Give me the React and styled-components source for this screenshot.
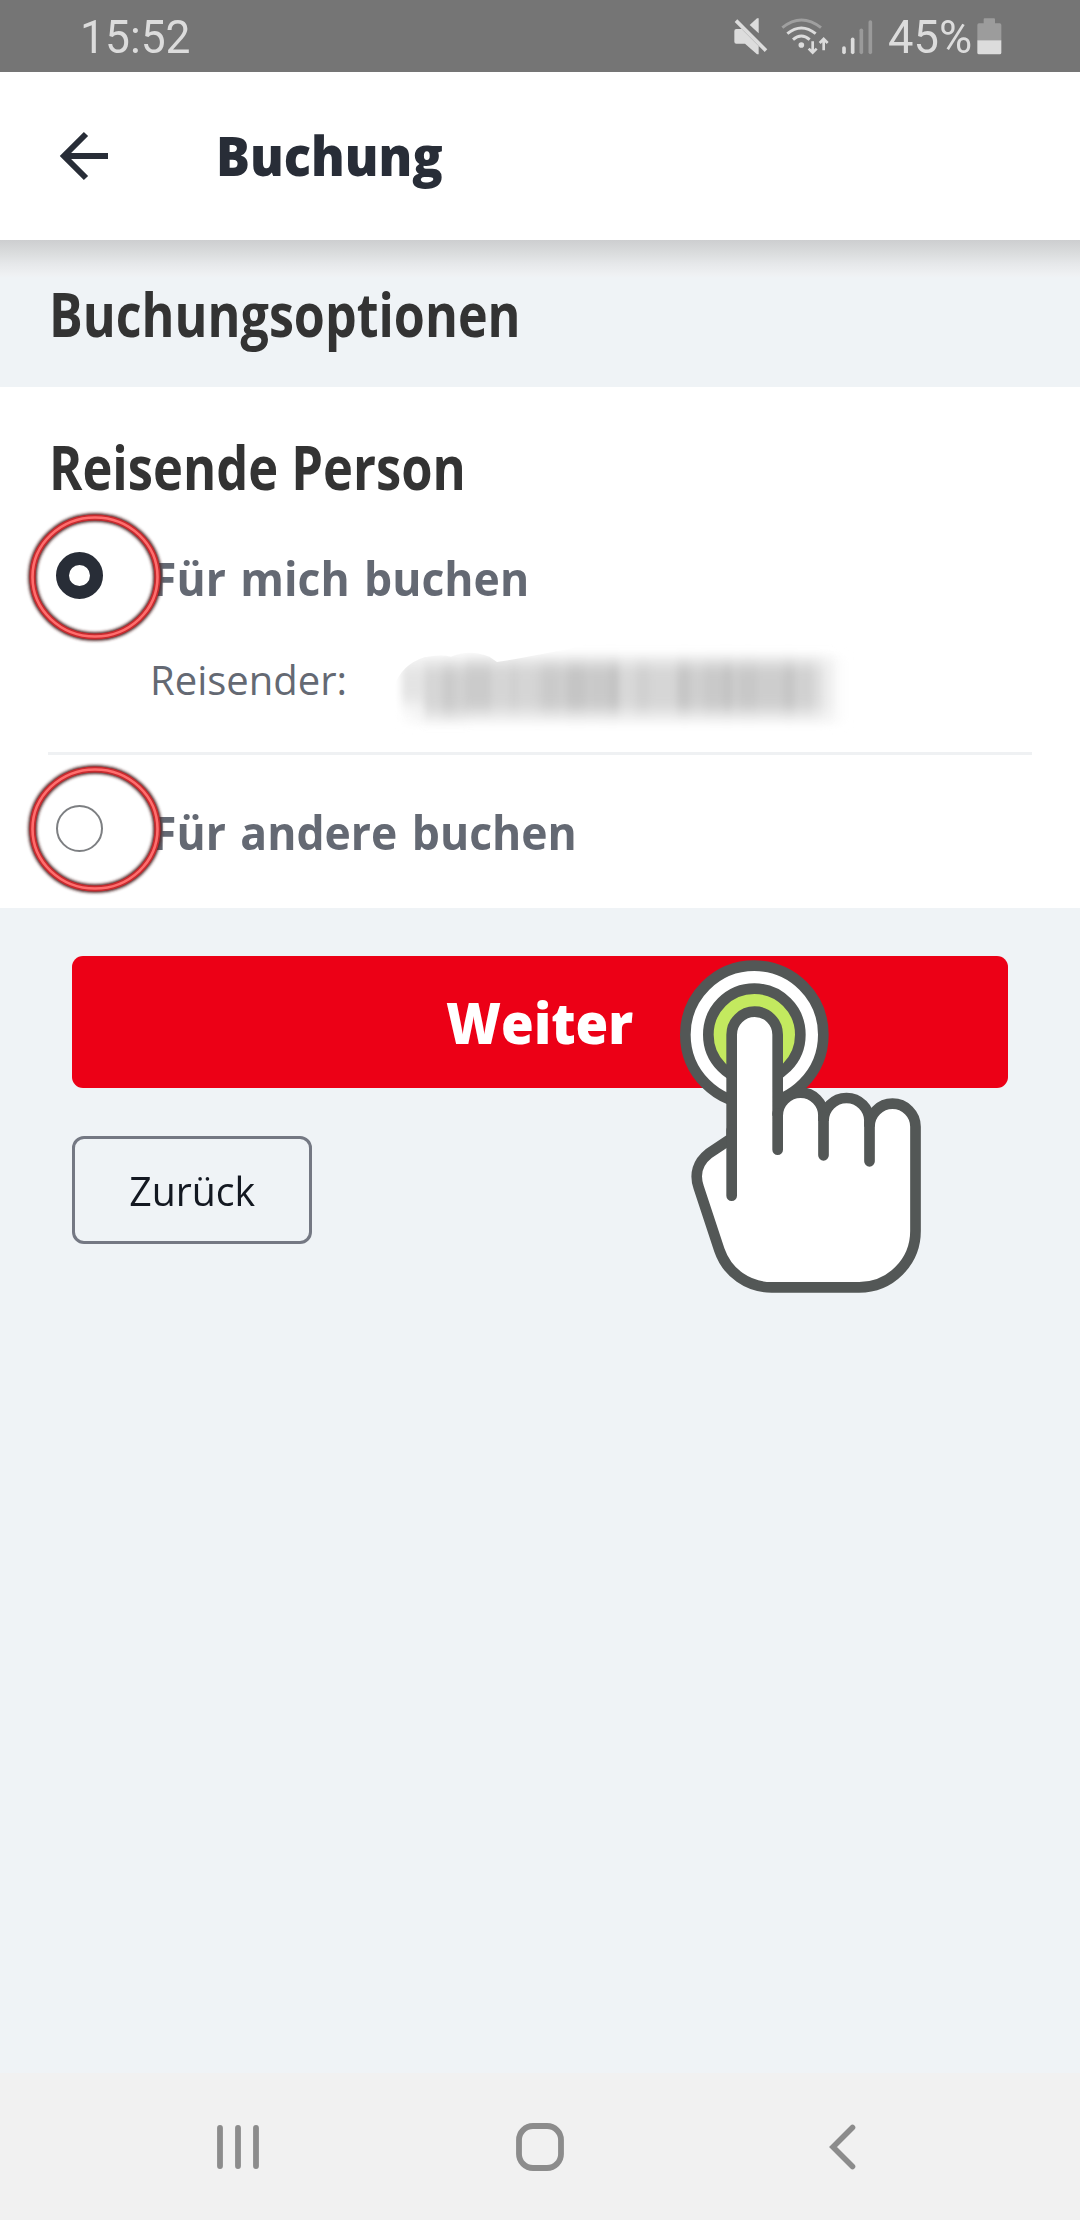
import React, { useState } from "react";
import styled, { createGlobalStyle } from "styled-components";

const GlobalStyle = createGlobalStyle`
  * {
    box-sizing: border-box;
  }
  body {
    margin: 0;
    background: #eff3f6;
    font-family: "Open Sans", "Noto Sans", sans-serif;
  }
`;

const MutedIcon = () => (
  <svg width="36" height="40" viewBox="100 50 108 120">
    <path
      d="M110 86 H126 L177 137 V162 H172 L136 130 H110 Q104 130 104 124 V92 Q104 86 110 86 Z"
      fill="#dcdcdc"
    />
    <path d="M150 74 L172 54 H177 V99 Z" fill="#dcdcdc" />
    <path d="M112 57 L200 145" stroke="#757575" strokeWidth="8" />
    <path d="M109 61 L199 151" stroke="#dcdcdc" strokeWidth="11" />
  </svg>
);

const WifiIcon = () => (
  <svg width="50" height="40" viewBox="240 50 150 120" fill="none">
    <path d="M247 82 Q304 36 363 82" stroke="#9f9f9f" strokeWidth="9" />
    <path d="M262 100 Q304 66 347 100" stroke="#dcdcdc" strokeWidth="9" />
    <path d="M279 118 Q304 96 329 118" stroke="#dcdcdc" strokeWidth="9" />
    <circle cx="304" cy="134" r="8.5" fill="#dcdcdc" />
    <path
      d="M338 123 V154 M326 145 L338 157 L350 145 M371 150 V118 M359 128 L371 116 L383 128"
      stroke="#dcdcdc"
      strokeWidth="8"
    />
  </svg>
);

const SignalIcon = () => (
  <svg width="34" height="40" viewBox="423 50 102 120" strokeWidth="11" strokeLinecap="round">
    <path d="M432 143 V156" stroke="#dcdcdc" />
    <path d="M458 117 V156" stroke="#dcdcdc" />
    <path d="M484 90 V156" stroke="#9a9a9a" />
    <path d="M511 65 V156" stroke="#9a9a9a" />
  </svg>
);

const BatteryIcon = () => (
  <svg width="26" height="40" viewBox="830 50 78 120">
    <path
      d="M850 69 V57 Q850 54 853 54 H881 Q884 54 884 57 V69 H898 Q903 69 903 74 V120 H831 V74 Q831 69 836 69 Z"
      fill="#9c9c9c"
    />
    <path d="M831 120 H903 V157 Q903 162 898 162 H836 Q831 162 831 157 Z" fill="#dcdcdc" />
  </svg>
);

const BackArrow = () => (
  <svg width="50" height="50" viewBox="0 0 50 50" fill="none" stroke="#282d37" strokeWidth="6">
    <path d="M49 25 H6" />
    <path d="M27 3 L5 25 L27 47" />
  </svg>
);

const HandPointer = () => (
  <svg width="440" height="390" viewBox="0 0 1320 1170" stroke="#535756" strokeWidth="32">
    <circle cx="343" cy="314" r="207" fill="#fff" />
    <circle cx="343" cy="314" r="138" fill="#c3e95f" />
    <path
      d="M275 630 V314 A69 69 0 0 1 413 314 V557 A68.7 69 0 0 1 550.5 557 V573 A69 69 0 0 1 688.5 573 V590 A69 69 0 0 1 826.5 590 V903 A169 169 0 0 1 657 1072 H395 C325 1072 262 1030 238 960 L176 772 C162 732 174 696 206 671 L275 625 Z"
      fill="#fff"
    />
    <path
      d="M275 600 V797 M413 550 V659 M550.5 560 V676 M688.5 575 V694"
      fill="none"
      strokeLinecap="round"
    />
  </svg>
);

// x, width, grey level
const strips = [
  [62, 78, 228], [130, 60, 214], [184, 42, 203], [222, 36, 209], [254, 82, 203],
  [330, 62, 213], [390, 20, 207], [408, 62, 213], [462, 26, 209], [484, 48, 202],
  [530, 34, 206], [558, 56, 197], [612, 24, 203], [630, 58, 201], [686, 30, 195],
  [714, 54, 216], [766, 42, 208], [806, 86, 214], [888, 42, 198], [928, 44, 207],
  [970, 62, 201], [1028, 26, 194], [1052, 24, 205], [1074, 56, 200], [1128, 82, 205],
  [1206, 38, 198], [1242, 60, 209], [1298, 30, 222], [1326, 30, 238],
];

const BlurredName = () => (
  <svg width="500" height="110" viewBox="0 0 1500 330">
    <defs>
      <filter id="smear" x="-10%" y="-60%" width="120%" height="220%">
        <feGaussianBlur stdDeviation="11 23" />
      </filter>
      <filter id="halo" x="-10%" y="-60%" width="120%" height="220%">
        <feGaussianBlur stdDeviation="22 14" />
      </filter>
      <clipPath id="brush">
        <path d="M40 330 V170 Q60 105 130 82 Q180 72 210 80 Q265 56 325 80 L348 96 L400 88 L560 58 L700 20 H1460 V330 Z" />
      </clipPath>
    </defs>
    <g clipPath="url(#brush)">
      <rect x="80" y="80" width="1290" height="200" fill="#f6f6f6" filter="url(#halo)" />
      <g filter="url(#smear)">
        {strips.map(([x, width, grey]) => (
          <rect
            key={x}
            x={x}
            y={x < 240 ? 102 : 96}
            width={width}
            height={x < 130 ? 120 : 152}
            fill={`rgb(${grey},${grey},${grey})`}
          />
        ))}
      </g>
    </g>
  </svg>
);

const MarkerRing = () => (
  <svg width="144" height="144" viewBox="-72 -72 144 144" fill="none">
    <defs>
      <filter id="soft" x="-20%" y="-20%" width="140%" height="140%">
        <feGaussianBlur stdDeviation="1.4" />
      </filter>
    </defs>
    <ellipse rx="62.5" ry="59.5" stroke="#4b2020" strokeWidth="8.5" filter="url(#soft)" />
    <ellipse rx="62.5" ry="59.5" stroke="#c92b2f" strokeWidth="6" />
    <ellipse rx="62.5" ry="59.5" stroke="#ff6d6d" strokeWidth="2.6" />
  </svg>
);

const App = () => {
  const [traveller, setTraveller] = useState("me");

  return (
    <Screen>
      <GlobalStyle />
      <StatusBar>
        <StatusText $squeeze={0.965}>15:52</StatusText>
        <StatusIcons>
          <MutedIcon />
          <WifiIcon />
          <SignalIcon />
          <StatusText $squeeze={0.985}>45%</StatusText>
          <BatteryIcon />
        </StatusIcons>
      </StatusBar>

      <Header>
        <BackArrow />
        <HeaderTitle>Buchung</HeaderTitle>
      </Header>

      <SectionBar>
        <Heading>Buchungsoptionen</Heading>
      </SectionBar>

      <Card>
        <Heading as="h3" $size={60} $squeeze={0.844}>
          Reisende Person
        </Heading>
        <Option $height={162} onClick={() => setTraveller("me")}>
          <Radio $checked={traveller === "me"} />
          <OptionLabel>Für mich buchen</OptionLabel>
          <Marker>
            <MarkerRing />
          </Marker>
        </Option>
        <TravellerRow>
          <TravellerLabel>Reisender:</TravellerLabel>
          <BlurredName />
        </TravellerRow>
        <Divider />
        <Option $height={153} onClick={() => setTraveller("other")}>
          <Radio $checked={traveller === "other"} />
          <OptionLabel>Für andere buchen</OptionLabel>
          <Marker $lift={2}>
            <MarkerRing />
          </Marker>
        </Option>
      </Card>

      <Actions>
        <PrimaryButton>
          <ButtonText $squeeze={0.93}>Weiter</ButtonText>
          <Pointer>
            <HandPointer />
          </Pointer>
        </PrimaryButton>
        <SecondaryButton>
          <ButtonText $squeeze={0.98}>Zurück</ButtonText>
        </SecondaryButton>
      </Actions>

      <NavBar>
        <svg width="44" height="50" viewBox="0 0 44 50" stroke="#8c8c8c" strokeWidth="5.8" strokeLinecap="round">
          <path d="M4 6 V44 M22 6 V44 M40 6 V44" />
        </svg>
        <svg width="50" height="50" viewBox="0 0 50 50" fill="none" stroke="#8c8c8c" strokeWidth="5.8">
          <rect x="4" y="4" width="42" height="42" rx="14" />
        </svg>
        <svg
          width="44"
          height="50"
          viewBox="0 0 44 50"
          fill="none"
          stroke="#8c8c8c"
          strokeWidth="5.6"
          strokeLinecap="round"
        >
          <path d="M32.5 5.5 L13 25 L32.5 44.5" />
        </svg>
      </NavBar>
    </Screen>
  );
};

const Screen = styled.main`
  display: flex;
  flex-direction: column;
  width: 1080px;
  height: 2220px;
  overflow: hidden;
`;

const StatusBar = styled.div`
  display: flex;
  justify-content: space-between;
  align-items: center;
  height: 72px;
  padding: 2px 77px 0 80px;
  background: #757575;
  svg {
    display: block;
  }
`;

const StatusText = styled.span`
  font-family: Roboto, sans-serif;
  font-size: 46px;
  line-height: 70px;
  color: #dcdcdc;
  transform: scaleX(${(p) => p.$squeeze});
  transform-origin: left;
`;

const StatusIcons = styled.div`
  display: flex;
  align-items: center;
  height: 70px;
  svg + svg {
    margin-left: 11px;
  }
  span {
    margin: 0 4px 0 13px;
  }
`;

const Header = styled.header`
  display: flex;
  align-items: center;
  height: 168px;
  padding-left: 59px;
  background: #fff;
`;

const HeaderTitle = styled.h1`
  margin: -2px 0 0 107px;
  font-size: 54.5px;
  font-weight: 800;
  line-height: 80px;
  color: #282d37;
  transform: scaleX(0.925);
  transform-origin: left;
`;

const SectionBar = styled.div`
  display: flex;
  align-items: center;
  height: 147px;
  padding-left: 48px;
  background: linear-gradient(
    #cdced0 0,
    #dadcdd 13px,
    #e6e8ea 24px,
    #eff1f3 35px,
    #eff3f6 38px
  );
`;

const Heading = styled.h2`
  margin: 0 0 0 1px;
  font-size: ${(p) => p.$size || 61}px;
  font-weight: 700;
  line-height: 60px;
  color: #333;
  white-space: nowrap;
  transform: scaleX(${(p) => p.$squeeze || 0.823});
  transform-origin: left;
`;

const Card = styled.section`
  height: 521px;
  padding: 50px 48px 0;
  background: #fff;
`;

const Option = styled.div`
  position: relative;
  display: flex;
  align-items: center;
  height: ${(p) => p.$height}px;
  padding-left: 8px;
`;

const Radio = styled.span`
  width: 47px;
  height: 47px;
  margin-top: -6px;
  border: ${(p) => (p.$checked ? "13px solid #282d37" : "2px solid #7d7f82")};
  border-radius: 50%;
`;

const OptionLabel = styled.span`
  margin-left: 49px;
  font-size: 46px;
  font-weight: 700;
  word-spacing: 3px;
  color: #646973;
  white-space: nowrap;
  transform: scaleX(0.967);
  transform-origin: left;
`;

const Marker = styled.div`
  position: absolute;
  left: -25px;
  top: 50%;
  height: 144px;
  margin-top: ${(p) => -73 - (p.$lift || 0)}px;
`;

const TravellerRow = styled.div`
  display: flex;
  align-items: center;
  height: 41px;
  margin-bottom: 52px;
  padding-left: 102px;
  svg {
    flex: none;
    margin: 11px 0 0 34px;
  }
`;

const TravellerLabel = styled.span`
  font-size: 40px;
  color: #646973;
`;

const Divider = styled.hr`
  height: 3px;
  margin: 0;
  border: 0;
  background: #eff1f3;
`;

const Actions = styled.div`
  display: flex;
  flex: 1;
  flex-direction: column;
  align-items: flex-start;
  gap: 48px;
  padding: 48px 72px;
`;

const PrimaryButton = styled.button`
  position: relative;
  width: 100%;
  height: 132px;
  padding: 0;
  border: 0;
  border-radius: 11px;
  background: #ec0016;
  color: #fff;
  font: 800 57px "Open Sans", sans-serif;
`;

const SecondaryButton = styled.button`
  width: 240px;
  height: 108px;
  padding: 0;
  border: 3px solid #747883;
  border-radius: 12px;
  background: none;
  color: #131821;
  font: 400 40px "Open Sans", sans-serif;
`;

const ButtonText = styled.span`
  display: inline-block;
  transform: scaleX(${(p) => p.$squeeze});
`;

const Pointer = styled.div`
  position: absolute;
  left: 568px;
  top: -26px;
`;

const NavBar = styled.nav`
  display: flex;
  justify-content: space-between;
  align-items: center;
  height: 147px;
  padding: 0 216px;
  background: #f1f1f1;
`;

export default App;
